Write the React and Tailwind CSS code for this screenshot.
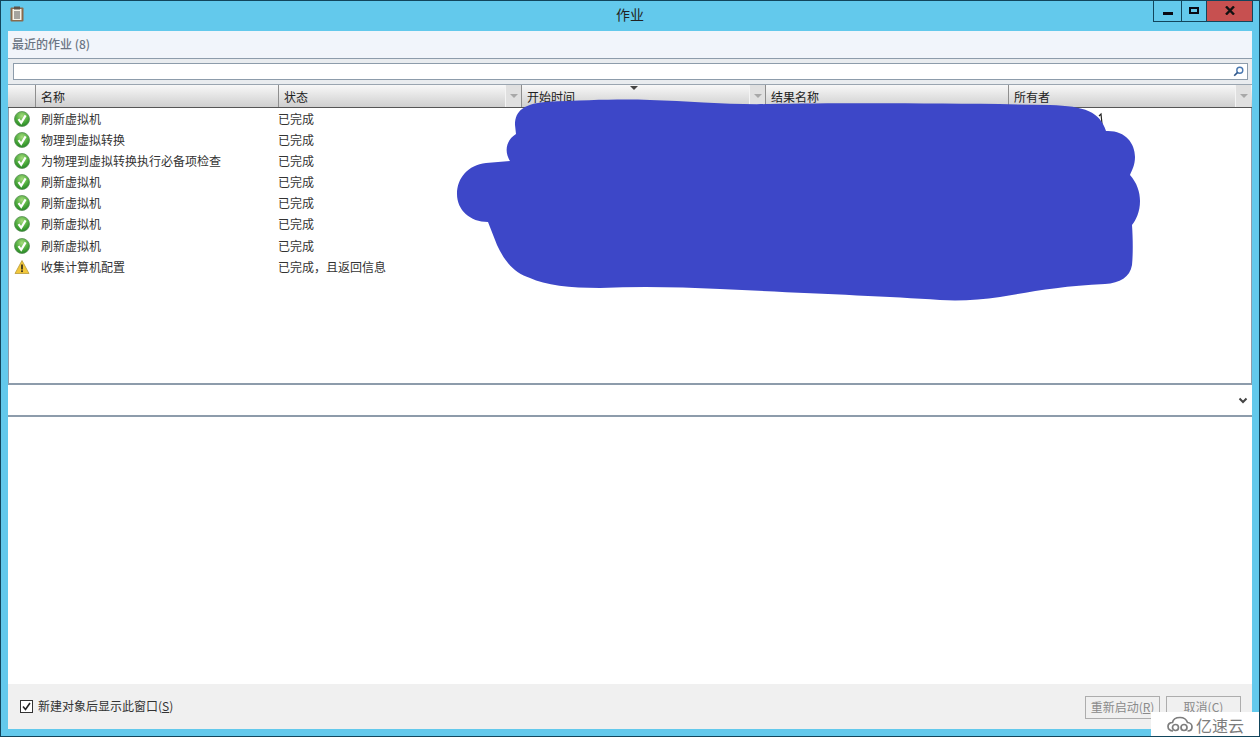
import React from "react";

const font = { fontFamily: '"Noto Sans CJK SC", "Liberation Sans", sans-serif' };

const jobs = [
  { name: "刷新虚拟机", status: "已完成" },
  { name: "物理到虚拟转换", status: "已完成" },
  { name: "为物理到虚拟转换执行必备项检查", status: "已完成" },
  { name: "刷新虚拟机", status: "已完成" },
  { name: "刷新虚拟机", status: "已完成" },
  { name: "刷新虚拟机", status: "已完成" },
  { name: "刷新虚拟机", status: "已完成" },
  { name: "收集计算机配置", status: "已完成，且返回信息", warn: true },
];

function OkIcon() {
  return (
    <svg width="16" height="16" viewBox="0 0 16 16">
      <defs>
        <radialGradient id="okFill" cx="0.5" cy="0.3" r="0.8">
          <stop offset="0" stopColor="#a5dc7c" />
          <stop offset="0.55" stopColor="#4aa83a" />
          <stop offset="1" stopColor="#167a1c" />
        </radialGradient>
      </defs>
      <circle cx="8" cy="8" r="7.5" fill="url(#okFill)" stroke="#5b8f58" strokeWidth="0.8" />
      <path d="M4.5 8.2 7.2 11.8 11.6 4.4" fill="none" stroke="#fff" strokeWidth="2.2" />
    </svg>
  );
}

function WarnIcon() {
  return (
    <svg width="16" height="16" viewBox="0 0 16 16">
      <path d="M8 1.5 15 14.5H1Z" fill="#f2c73a" stroke="#b89a3a" strokeWidth="0.8" strokeLinejoin="round" />
      <rect x="7.1" y="5.5" width="1.8" height="5" fill="#3a3320" />
      <rect x="7.1" y="11.3" width="1.8" height="1.8" fill="#3a3320" />
    </svg>
  );
}

function ClipboardIcon() {
  return (
    <svg width="14" height="16" viewBox="0 0 14 16">
      <rect x="0.5" y="1.5" width="13" height="14" rx="1" fill="#8a6a4c" />
      <rect x="2.5" y="3" width="9" height="11" fill="#f6f3e8" />
      <rect x="4" y="0.5" width="6" height="3" fill="#5d5348" />
      <path d="M4 6h6M4 8h6M4 10h6M4 12h6" stroke="#555" strokeWidth="1" />
    </svg>
  );
}

function SearchIcon() {
  return (
    <svg width="11" height="11" viewBox="0 0 11 11">
      <circle cx="6.8" cy="4.2" r="3" fill="none" stroke="#4a78b0" strokeWidth="1.4" />
      <path d="M4.6 6.4 1.2 9.8" stroke="#2f5688" strokeWidth="1.6" />
    </svg>
  );
}

function HeaderCell({ label, width, menu }) {
  return (
    <div className={`relative flex h-full items-center border-r border-[#8e8e8e] last:border-r-0 ${width}`}>
      <span className="pl-[5px] pt-[1px] text-[12px] text-[#222]">{label}</span>
      {menu && (
        <span className="absolute right-0 top-0 flex h-full w-[16px] items-center justify-center border-l border-[#f4f4f4] bg-[#e0e0e0]">
          <span className="h-0 w-0 border-x-[4px] border-t-[4px] border-x-transparent border-t-[#a8a8a8]" />
        </span>
      )}
    </div>
  );
}

function Row({ job }) {
  return (
    <div className="flex h-[21.16px] items-center text-[12px] text-[#333]">
      <div className="flex w-[26px] justify-center">{job.warn ? <WarnIcon /> : <OkIcon />}</div>
      <div className="w-[243px] pl-[6px]">{job.name}</div>
      <div>{job.status}</div>
    </div>
  );
}

export default function App() {
  return (
    <div className="relative flex h-[737px] w-[1260px] flex-col overflow-hidden border border-[#12455c] bg-[#63c9ec]" style={font}>
      {/* title bar */}
      <div className="relative flex h-[30px] shrink-0 items-center justify-center pb-[3px]">
        <div className="absolute left-[9px] top-[5px]"><ClipboardIcon /></div>
        <span className="text-[14px] text-[#222]">作业</span>
        <div className="absolute right-[6px] top-[-1px] flex h-[22px] border border-t-0 border-[#12455c]">
          <div className="flex w-[28px] items-center justify-center border-r border-[#12455c] pt-[5px]">
            <span className="h-[3px] w-[10px] bg-[#0a0a14]" />
          </div>
          <div className="flex w-[25px] items-center justify-center border-r border-[#12455c]">
            <span className="h-[7px] w-[10px] border-2 border-[#0a0a14]" />
          </div>
          <div className="flex w-[45px] items-center justify-center bg-[#c75050]">
            <svg width="10" height="9" viewBox="0 0 10 9">
              <path d="M1 0.5 9 8.500M9 0.5 1 8.500" fill="none" stroke="#111" strokeWidth="2.4" />
            </svg>
          </div>
        </div>
      </div>

      {/* client area */}
      <div className="mx-[7px] flex h-[698px] shrink-0 flex-col bg-white">
        <div className="flex h-[27px] items-center bg-[#f1f5fb] pb-[2px] pl-[4px] text-[12px] font-medium text-[#6b7584]">
          最近的作业 (8)
        </div>

        <div className="flex flex-1 flex-col">
          <div className="flex h-[26px] items-center border-t border-[#8d9cab] bg-[#e9ecef] pl-[5px] pr-[4px]">
            <div className="flex h-[17px] flex-1 items-center justify-end border border-[#8d9cab] bg-white pr-[3px]">
              <SearchIcon />
            </div>
          </div>

          <div className="flex h-[24px] border-y border-b-[#555] border-t-[#9aa5b0] bg-gradient-to-b from-[#f8f8f8] to-[#cfcfcf] pl-[1px] pr-[1px]">
            <HeaderCell label="" width="w-[27px]" />
            <HeaderCell label="名称" width="w-[243px]" />
            <HeaderCell label="状态" width="w-[243px]" menu />
            <HeaderCell label="开始时间" width="w-[244px]" menu />
            <HeaderCell label="结果名称" width="w-[243px]" />
            <HeaderCell label="所有者" width="flex-1" menu />
          </div>

          <div className="h-[275px] border-x border-[#8d9cab]">
            {jobs.map((job, i) => (
              <Row key={i} job={job} />
            ))}
          </div>

          <div className="flex h-[34px] items-center justify-end border-y-2 border-[#8d9cab] pr-[4px] text-[#444]">
            <svg width="10" height="7" viewBox="0 0 10 7">
              <path d="M1.5 1.5 5 5 8.5 1.5" fill="none" stroke="#444" strokeWidth="2" />
            </svg>
          </div>

          <div className="flex-1 bg-white" />

          <div className="flex h-[45px] items-center justify-between bg-[#f0f0f0] pb-[1px] pl-[12px] pr-[11px]">
            <div className="flex items-center gap-[5px] text-[12px] text-[#333]">
              <span className="flex h-[13px] w-[13px] items-center justify-center border border-[#333] bg-white">
                <svg width="11" height="11" viewBox="0 0 11 11">
                  <path d="M2 5.5 4.5 8.5 9 2" fill="none" stroke="#222" strokeWidth="1.6" />
                </svg>
              </span>
              <span>新建对象后显示此窗口(<span className="underline">S</span>)</span>
            </div>
            <div className="flex gap-[6px] pt-[2px] text-[12px] text-[#8a8a8a]">
              <div className="flex h-[23px] w-[75px] items-center justify-center border border-[#adadad] bg-[#f0f0f0]">
                重新启动(<span className="underline">R</span>)
              </div>
              <div className="flex h-[23px] w-[75px] items-center justify-center border border-[#adadad] bg-[#f0f0f0]">
                取消(C)
              </div>
            </div>
          </div>
        </div>
      </div>

      {/* sort arrow on the header */}
      <span className="absolute left-[629px] top-[85px] h-0 w-0 border-x-[4px] border-t-[4px] border-x-transparent border-t-[#444]" />

      {/* blue scribble over the hidden columns */}
      <svg className="absolute left-[-1px] top-[-1px]" width="1260" height="737" viewBox="0 0 1260 737">
        <path d="M1099 116 1101 114 1102 124" fill="none" stroke="#222" strokeWidth="1.2" />
        <path
          d="M515 125 C515 110 525 104 545 102 C590 100 620 99 650 100 C690 101 730 105 770 104 C830 103 950 103 1050 105 C1085 106 1100 112 1106 131
             C1125 130 1135 143 1135 157 C1135 165 1132 170 1130 175 C1137 183 1140 192 1140 201 C1140 212 1136 220 1132 225
             C1133 240 1133 255 1132 265 C1130 277 1120 283 1105 284 C1060 286 1030 292 1000 297 C980 300 960 301 940 300
             C880 296 800 293 720 289 C680 287 640 286 600 288 C570 288 545 285 530 278 C515 274 505 262 497 245 L488 222
             C470 222 457 210 457 194 C457 178 468 165 486 163 L510 161 C504 152 506 140 516 134 Z"
          fill="#3d47c8"
        />
      </svg>

      {/* watermark */}
      <div className="absolute bottom-[-1px] right-[-1px] flex h-[25px] w-[109px] items-center justify-center gap-[3px] bg-white text-[16px] text-[#7d7d7d]">
        <svg width="26" height="17" viewBox="0 0 26 17" fill="none" stroke="#7d7d7d" strokeWidth="1.7">
          <path d="M6 15C3 15 1 13 1 10.5 1 8 3 6.5 5.5 6.5 6 3.5 9 1.5 13 1.5 17 1.5 19.5 3.5 20.5 6.5 23 6.5 25 8.500 25 11 25 13.500 23 15 20.500 15" />
          <circle cx="8.500" cy="11.500" r="3" />
          <circle cx="17" cy="11.500" r="3" />
        </svg>
        <span>亿速云</span>
      </div>
    </div>
  );
}
